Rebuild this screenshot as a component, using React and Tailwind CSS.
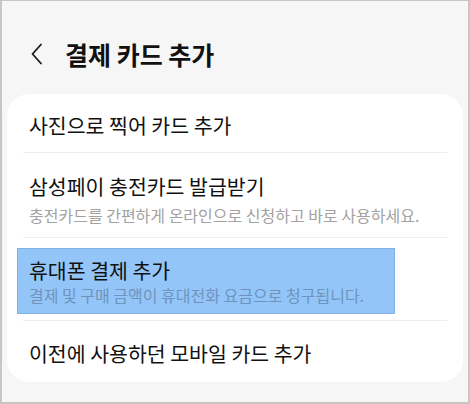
import React from "react";

const FONT = { fontFamily: '"Noto Sans CJK KR", "Noto Sans", sans-serif' };

const Divider = () => <div className="h-px bg-[#eeeeee] mx-[16px]" />;

const App = () => {
  return (
    <div
      className="w-[470px] h-[404px] bg-[#f6f6f6] border-x-2 border-b-2 border-t border-[#c6c6c6] overflow-hidden"
      style={FONT}
    >
      <div className="flex items-center h-[93px] pl-[28px] pt-[13px]">
        <svg width="14" height="22" viewBox="0 0 14 22" fill="none">
          <path d="M11 1.5 L2.5 11 L11 20.5" stroke="#1a1a1a" strokeWidth="1.8" strokeLinecap="round" strokeLinejoin="round" />
        </svg>
        <h1 className="ml-[21px] text-[25px] leading-[30px] font-bold text-[#111111]">결제 카드 추가</h1>
      </div>

      <div className="mx-[5px] bg-white rounded-[22px] h-[288px]">
        <div className="h-[58px] pt-[18px] px-[22px]">
          <p className="text-[20.5px] leading-[26px] text-[#111111]">사진으로 찍어 카드 추가</p>
        </div>
        <Divider />
        <div className="h-[84px] pt-[20px] px-[22px]">
          <p className="text-[20.5px] leading-[26px] text-[#111111]">삼성페이 충전카드 발급받기</p>
          <p className="mt-[6px] text-[16px] leading-[20px] text-[#a2a2a2]">충전카드를 간편하게 온라인으로 신청하고 바로 사용하세요.</p>
        </div>
        <Divider />
        <div className="relative h-[82px] pt-[19px] px-[22px]">
          <div className="absolute left-[10px] top-[10px] w-[378px] h-[66px] bg-[#93c5f8] border border-[#80b2e4]" />
          <p className="relative text-[20.5px] leading-[26px] text-[#111111]">휴대폰 결제 추가</p>
          <p className="relative mt-[2px] text-[16px] leading-[20px] text-[#6f93ba]">결제 및 구매 금액이 휴대전화 요금으로 청구됩니다.</p>
        </div>
        <Divider />
        <div className="h-[62px] pt-[19px] px-[22px]">
          <p className="text-[20.5px] leading-[26px] text-[#111111]">이전에 사용하던 모바일 카드 추가</p>
        </div>
      </div>
    </div>
  );
};

export default App;
